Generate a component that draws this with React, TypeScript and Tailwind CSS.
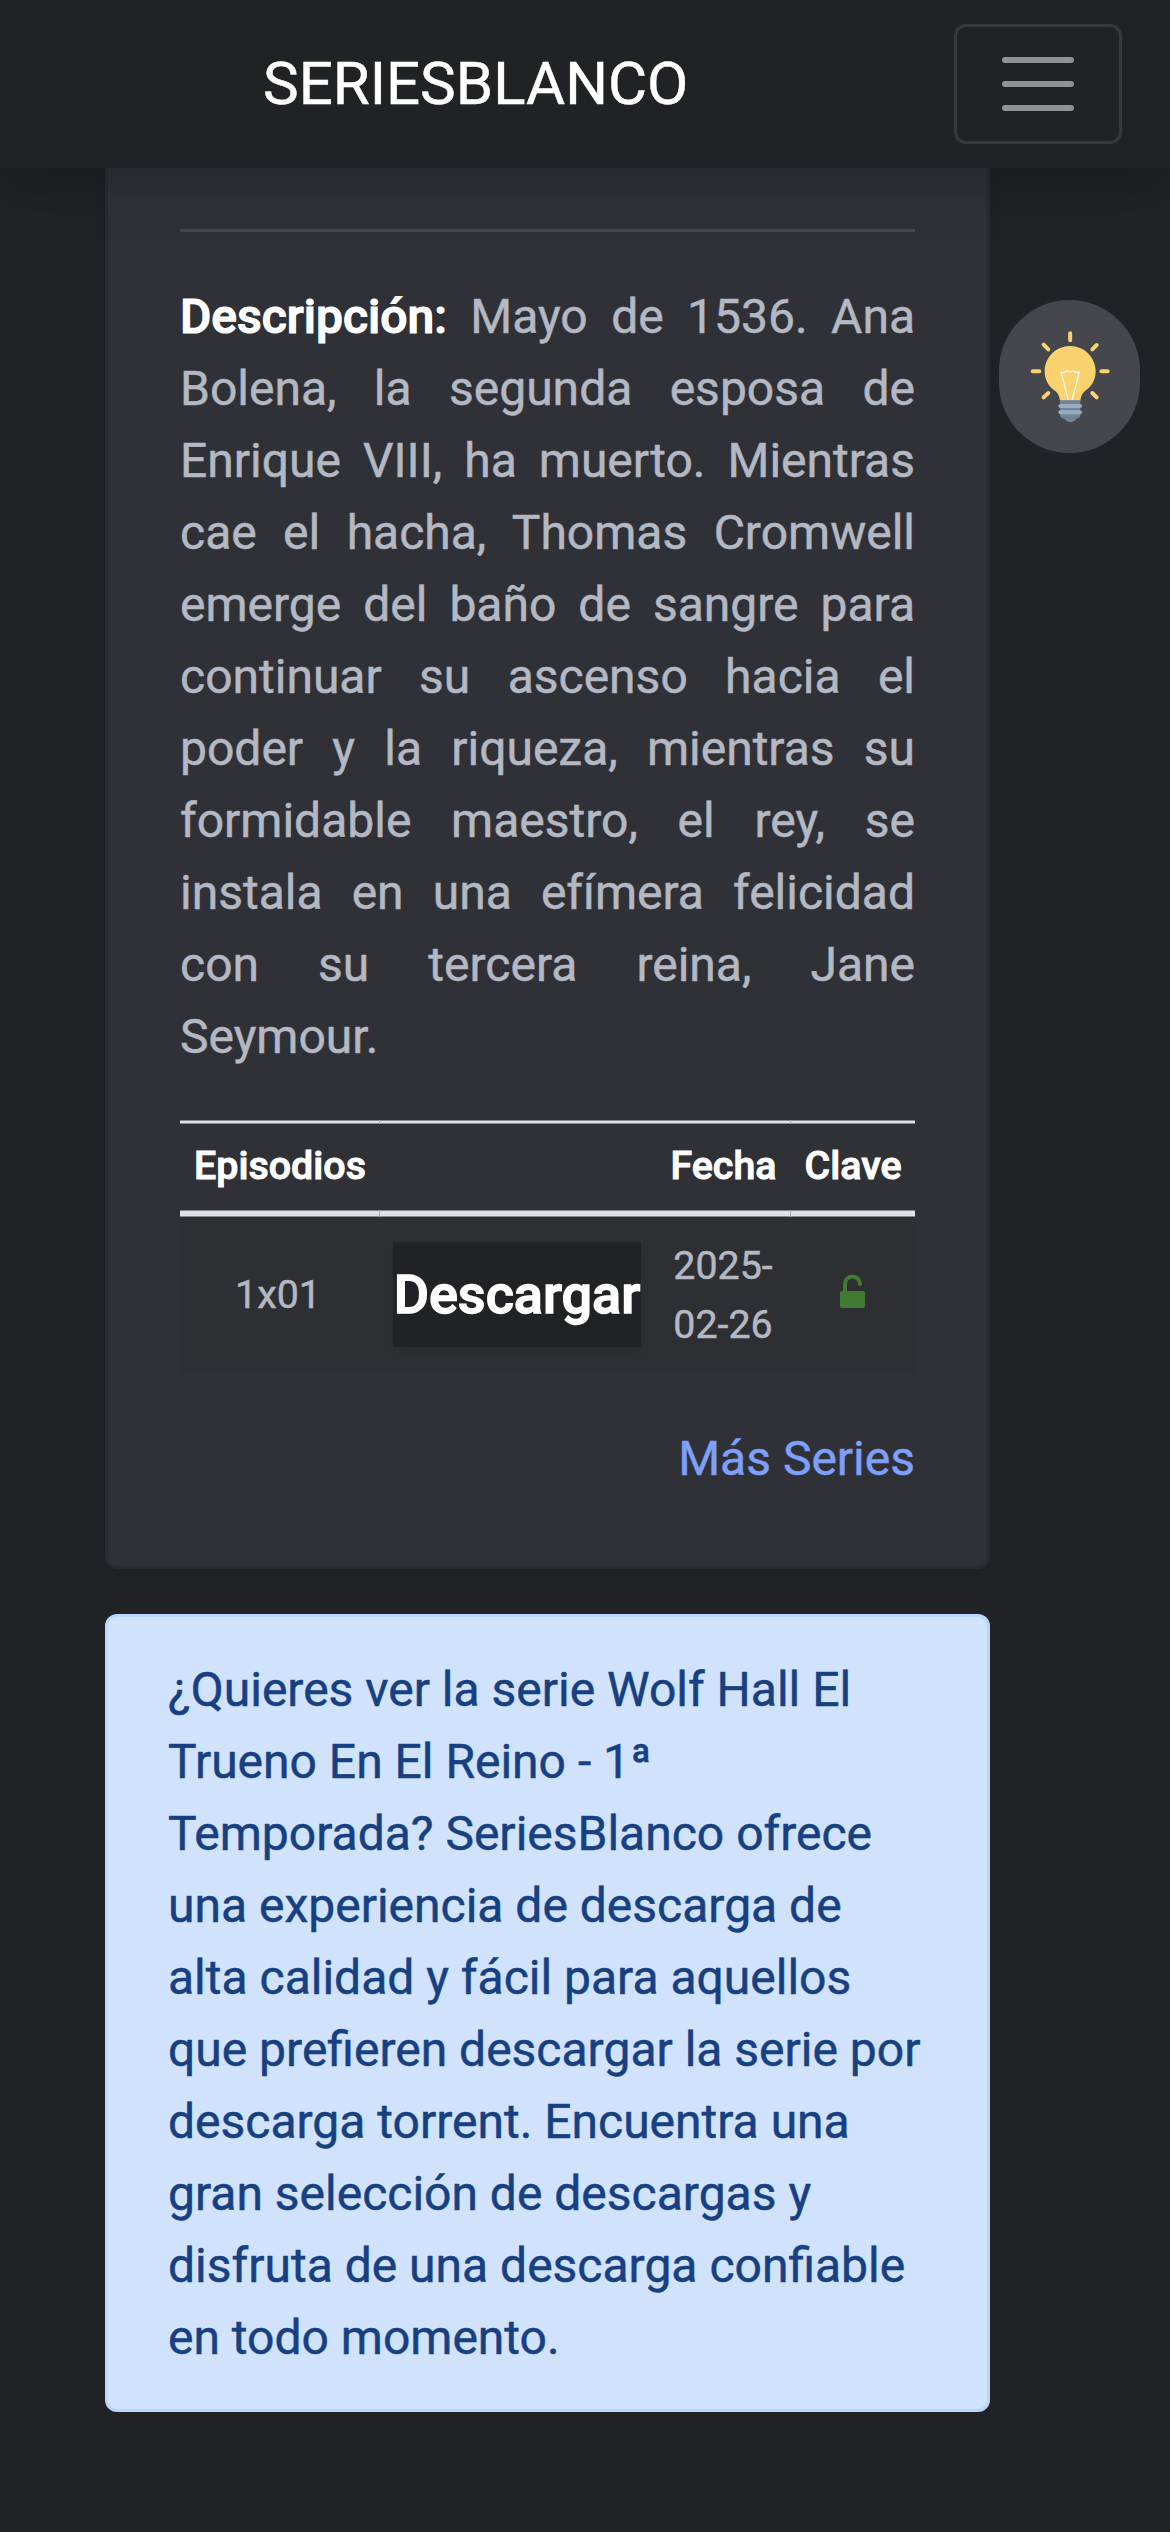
import React from "react";

const columns = ["w-[200px]", "w-[277px]", "w-[134px]", "w-[124px]"];
const seams = ["border-r", "", "border-r", ""];

function Rule({ thick }: { thick?: boolean }) {
  return (
    <div className="flex">
      {columns.map((w, i) => (
        <div
          key={w}
          className={`${w} ${seams[i]} ${thick ? "h-[7px]" : "h-1"} border-[#a9abaf] bg-[#88898d] py-px`}
        >
          <div className="h-full bg-[#dee2e6]" />
        </div>
      ))}
    </div>
  );
}

function Bulb() {
  return (
    <svg className="h-[92px] w-20" viewBox="148 152 240 276" fill="none">
      <g stroke="#fad26e" strokeWidth="12" strokeLinecap="round">
        <path d="M268.500 159V180M156 273H176M362 273H381M189 193L203 207M348 194L335 207M203 338L189 351M335 338L348 351" />
      </g>
      <path
        d="M268.500 197c-43 0-76.500 34-76.500 76 0 28 13 45 29 57 11 8 15 17 17 31h61c2-14 6-23 17-31 16-12 29-29 29-57 0-42-34-76-76.500-76z"
        fill="#fad26e"
      />
      <path d="M263 360L241 275q8 4 13-1q7-5 14 2q7-7 14-2q5 5 14 1L274 360" stroke="#fff" strokeWidth="3.500" strokeLinejoin="round" />
      <path d="M238 360H299V404q0 9-12 11q-7 10-18 10t-18-10q-13-2-13-11z" fill="#6f859a" />
      <path d="M239 377H298M239 396H298" stroke="#9bacbc" strokeWidth="12" strokeLinecap="round" />
    </svg>
  );
}

export default function App() {
  return (
    <div className="relative h-[2532px] w-[1170px] overflow-hidden bg-[#212226] font-[Roboto,sans-serif] text-[48px] leading-[72px] text-[#b3b8c3] [-webkit-text-stroke:0.5px]">
      <header className="relative z-10 flex h-[168px] items-center justify-between bg-[#212226] pr-12 pl-[263px] shadow-[0_24px_48px_rgba(0,0,0,0.15)]">
        <h1 className="text-[60px] leading-[90px] text-white">SERIESBLANCO</h1>
        <button aria-label="Menú" className="flex h-[120px] w-[168px] flex-col items-center justify-center gap-[18px] rounded-xl border-3 border-[#38393c]">
          <span className="h-1.5 w-[72px] rounded-full bg-[#909193]" />
          <span className="h-1.5 w-[72px] rounded-full bg-[#909193]" />
          <span className="h-1.5 w-[72px] rounded-full bg-[#909193]" />
        </button>
      </header>

      <main className="ml-[105px] w-[885px]">
        <section className="h-[1401px] rounded-b-xl border-x-3 border-b-3 border-[#2a2b2f] bg-[#303136] px-[72px] pt-[61px] shadow-[0_6px_12px_rgba(0,0,0,0.075)]">
          <hr className="h-[3px] border-0 bg-[#444549]" />
          <p className="mt-[49px] text-justify">
            <b className="font-medium text-white [-webkit-text-stroke:1.200px]">Descripción:</b> Mayo de 1536. Ana Bolena, la segunda esposa de Enrique VIII, ha muerto. Mientras cae el hacha, Thomas Cromwell emerge del baño de sangre para continuar su ascenso hacia el poder y la riqueza, mientras su formidable maestro, el rey, se instala en una efímera felicidad con su tercera reina, Jane Seymour.
          </p>

          <div className="mt-[47px] text-center text-[39.360px] leading-[59px]">
            <Rule />
            <div className="flex h-[86px] pt-3 font-medium text-white [-webkit-text-stroke:1px]">
              <div className="w-[200px]">Episodios</div>
              <div className="w-[277px]" />
              <div className="w-[134px] pr-px">Fecha</div>
              <div className="w-[124px]">Clave</div>
            </div>
            <Rule thick />
            <div className="flex h-[157px] items-center bg-[#2e2f32] pb-0.5">
              <div className="w-[200px] pr-1">1x01</div>
              <div className="flex w-[277px] justify-center pr-[3px]">
                <button className="h-[105px] w-[248px] bg-[#212226] text-[54px] font-medium whitespace-nowrap text-white shadow-[0_6px_12px_rgba(0,0,0,0.075)] [-webkit-text-stroke:1.400px]">
                  Descargar
                </button>
              </div>
              <div className="w-[134px] pr-0.5">2025-<br />02-26</div>
              <div className="flex w-[124px] justify-center pr-px pb-[7px]">
                <svg className="h-[34px] w-[25px]" viewBox="0 0 25 34">
                  <path d="M5 18V10a7.500 7.500 0 0 1 15 0" fill="none" stroke="#417a33" strokeWidth="4" strokeLinecap="round" />
                  <rect y="17" width="25" height="17" rx="2" fill="#417a33" />
                </svg>
              </div>
            </div>
          </div>

          <div className="mt-[49px] text-right">
            <a className="text-[#7f9ffb]">Más Series</a>
          </div>
        </section>

        <section className="mt-[45px] h-[798px] rounded-xl border-3 border-[#bad6fd] bg-[#d1e3fc] px-[60px] pt-[37px] text-[#174082]">
          ¿Quieres ver la serie Wolf Hall El Trueno En El Reino - 1ª Temporada? SeriesBlanco ofrece una experiencia de descarga de alta calidad y fácil para aquellos que prefieren descargar la serie por descarga torrent. Encuentra una gran selección de descargas y disfruta de una descarga confiable en todo momento.
        </section>
      </main>

      <button aria-label="Cambiar tema" className="absolute top-[300px] right-[30px] z-20 flex h-[153px] w-[141px] items-center justify-center rounded-full bg-[#45474d]">
        <Bulb />
      </button>
    </div>
  );
}
